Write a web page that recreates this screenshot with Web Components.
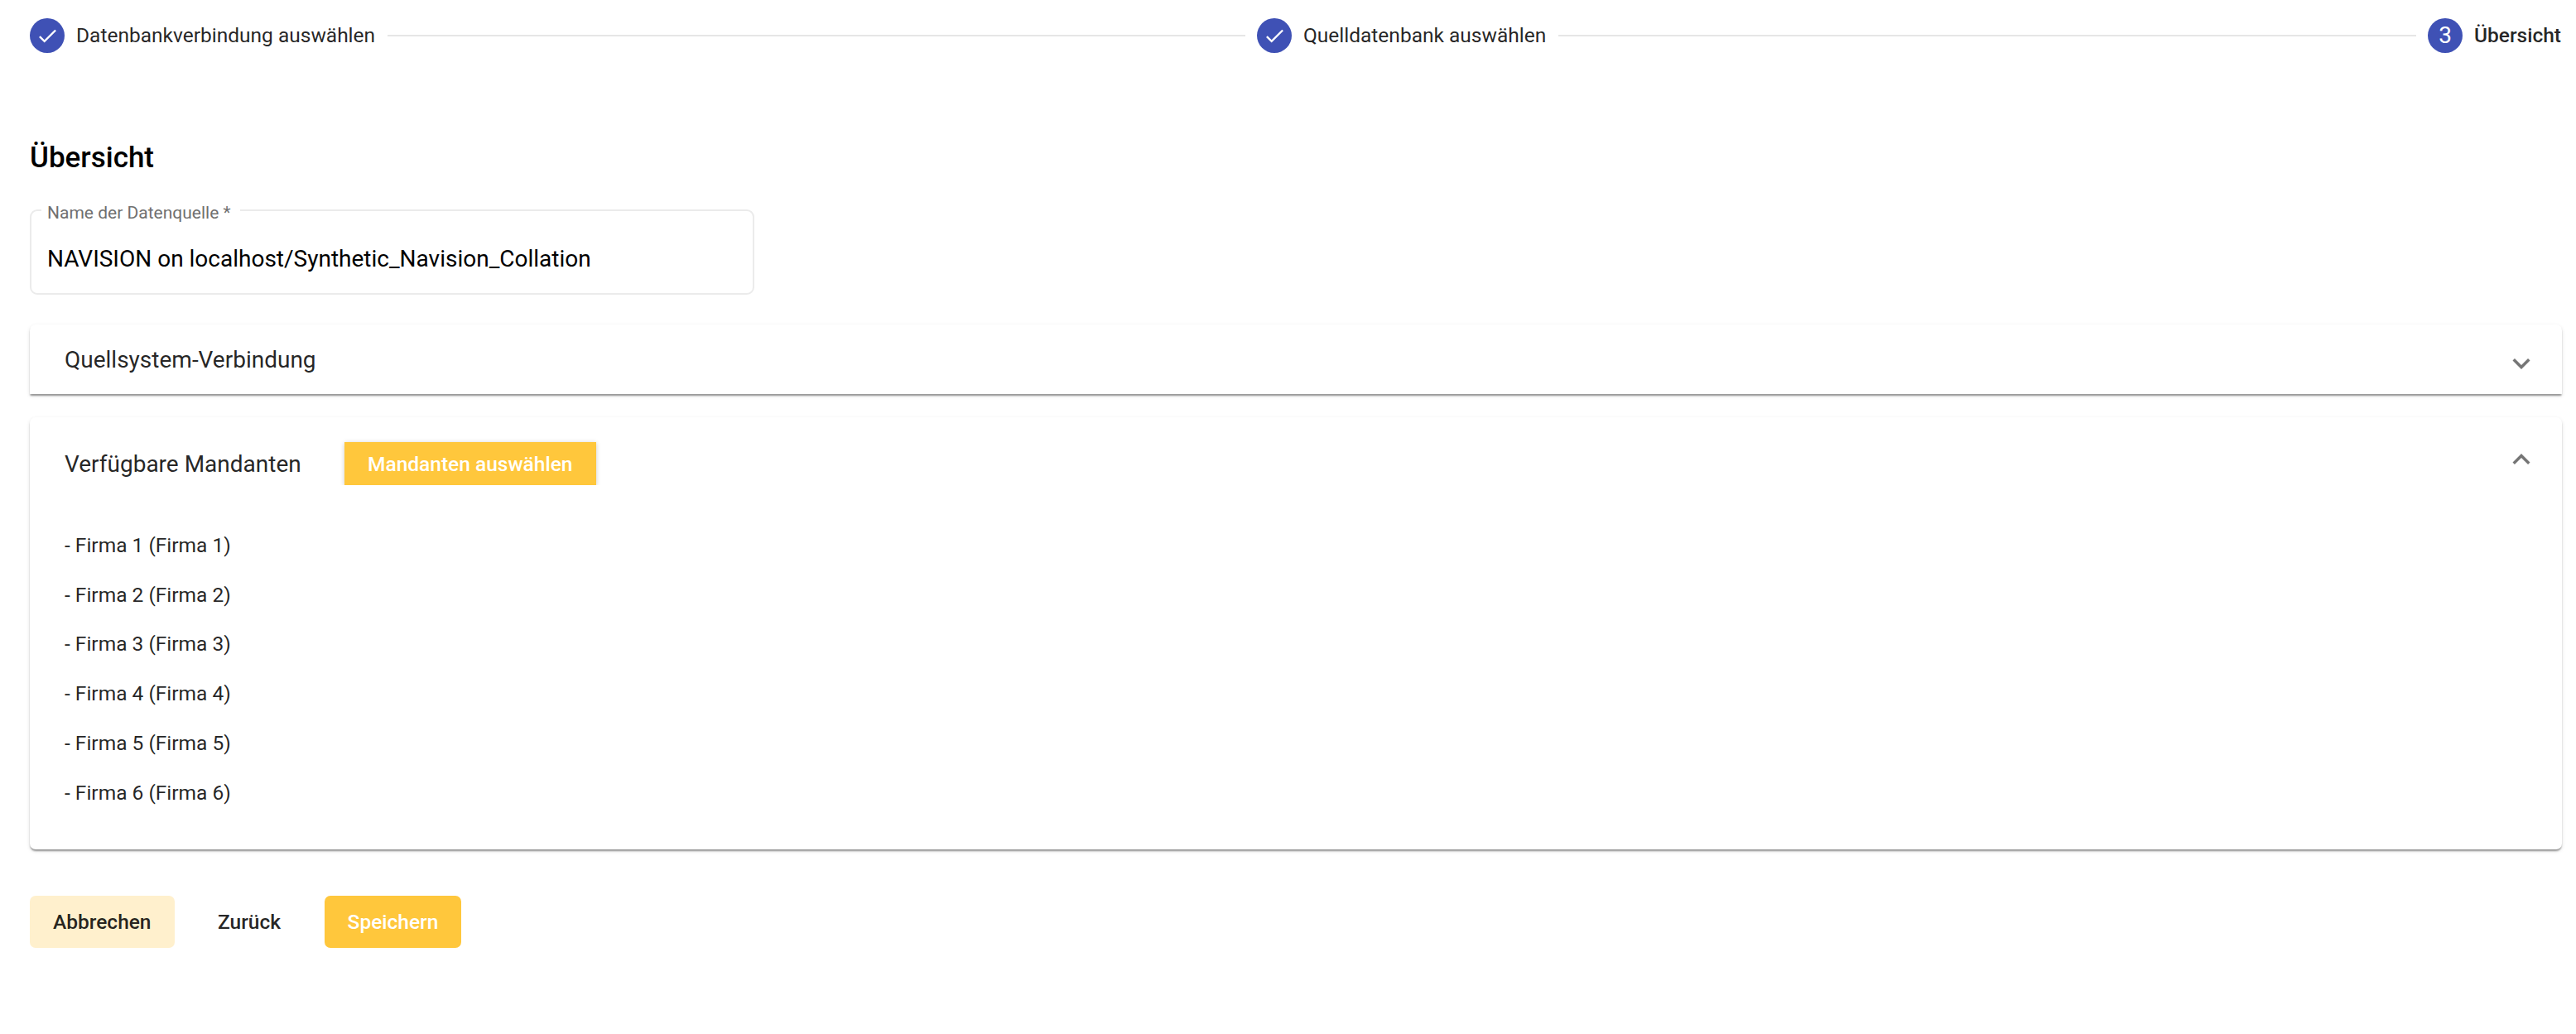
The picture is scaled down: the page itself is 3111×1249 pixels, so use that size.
<!DOCTYPE html>
<html lang="de">
<head>
<meta charset="utf-8">
<title>Übersicht</title>
<style>
    html, body { margin: 0; background: #fff; }
    body { font-family: Roboto, "Liberation Sans", sans-serif; color: rgba(0,0,0,.87); }
</style>
</head>
<body>
<wizard-page>
    <wizard-stepper slot="stepper">
        <wizard-step done>Datenbankverbindung auswählen</wizard-step>
        <wizard-step done>Quelldatenbank auswählen</wizard-step>
        <wizard-step number="3" active>Übersicht</wizard-step>
    </wizard-stepper>
    <page-title>Übersicht</page-title>
    <outlined-field label="Name der Datenquelle *">NAVISION on localhost/Synthetic_Navision_Collation</outlined-field>
    <accordion-card title-text="Quellsystem-Verbindung"></accordion-card>
    <accordion-card title-text="Verfügbare Mandanten" expanded>
        <flat-button slot="action" kind="select">Mandanten auswählen</flat-button>
        <company-row>- Firma 1 (Firma 1)</company-row>
        <company-row>- Firma 2 (Firma 2)</company-row>
        <company-row>- Firma 3 (Firma 3)</company-row>
        <company-row>- Firma 4 (Firma 4)</company-row>
        <company-row>- Firma 5 (Firma 5)</company-row>
        <company-row>- Firma 6 (Firma 6)</company-row>
    </accordion-card>
    <button-bar>
        <flat-button kind="soft">Abbrechen</flat-button>
        <flat-button kind="text">Zurück</flat-button>
        <flat-button kind="primary">Speichern</flat-button>
    </button-bar>
</wizard-page>

<script>
// tiny helper, every element just needs a shadow root with its markup
function shadow(el, html) {
    el.attachShadow({ mode: 'open' }).innerHTML = html;
}

class WizardPage extends HTMLElement {
    constructor() {
        super();
        shadow(this, `
        <style>
            :host { display: block; padding: 22px 17px 0 36px; }
        </style>
        <slot name="stepper"></slot>
        <slot></slot>`);
    }
}

class WizardStepper extends HTMLElement {
    constructor() {
        super();
        shadow(this, `
        <style>
            :host { display: flex; align-items: center; margin-right: 1px; }
        </style>
        <slot></slot>`);
    }
}

class WizardStep extends HTMLElement {
    constructor() {
        super();
        const number = this.getAttribute('number');
        const badge = number
            ? number
            : `<svg width="28.5" height="28.5" viewBox="0 0 24 24" fill="#fff"><path d="M9 16.17 4.83 12l-1.42 1.41L9 19 21 7l-1.41-1.41z"/></svg>`;
        shadow(this, `
        <style>
            /* grow from auto so the spare width goes evenly to the lines */
            :host { display: flex; align-items: center; flex: 1 1 auto; font-size: 24.5px; line-height: 42px; white-space: nowrap; }
            :host(:last-child) { flex: 0 0 auto; }
            :host(:last-child) .line { display: none; }
            .badge {
                flex: none; width: 42px; height: 42px; border-radius: 50%;
                background: #3f51b5; color: #fff; font-size: 28px;
                display: flex; align-items: center; justify-content: center;
            }
            .label { margin-left: 14px; color: rgba(0,0,0,.87); }
            :host([active]) .label { font-weight: 500; }
            .line { flex: 1; height: 2px; background: #e6e6e6; margin: -1px 14px 0 15px; }
        </style>
        <span class="badge">${badge}</span>
        <span class="label"><slot></slot></span>
        <span class="line"></span>`);
    }
}

class PageTitle extends HTMLElement {
    constructor() {
        super();
        shadow(this, `
        <style>
            :host { display: block; margin-top: 106px; font-size: 35px; line-height: 42px; font-weight: 500; color: #000; }
        </style>
        <slot></slot>`);
    }
}

class OutlinedField extends HTMLElement {
    constructor() {
        super();
        shadow(this, `
        <style>
            :host {
                display: block; position: relative; box-sizing: border-box;
                width: 875px; height: 103px; margin-top: 41px;
                border: 2px solid #ebebeb; border-radius: 9px;
                padding: 38px 19px 0; font-size: 28px; line-height: 40px; color: #000;
            }
            .legend {
                position: absolute; left: 12px; top: -10px; padding: 0 11px 0 7px;
                background: #fff; font-size: 21px; line-height: 24px; color: #707070;
            }
        </style>
        <span class="legend">${this.getAttribute('label')}</span>
        <slot></slot>`);
    }
}

class AccordionCard extends HTMLElement {
    constructor() {
        super();
        shadow(this, `
        <style>
            :host {
                display: block; margin-top: 36px; background: #fff;
                border-radius: 7px 7px 0 0;
                box-shadow: 0 3px 2px -1px rgba(0,0,0,.25), 0 2px 2px 0 rgba(0,0,0,.14), 0 2px 5px 0 rgba(0,0,0,.12);
            }
            :host([expanded]) { margin-top: 28px; border-radius: 7px; }
            .head { display: flex; align-items: center; height: 84px; padding: 0 28px 0 42px; }
            :host([expanded]) .head { height: 112px; }
            .title { font-size: 28px; color: rgba(0,0,0,.87); }
            .action { margin-left: 52px; }
            .grow { flex: 1; }
            svg { display: block; }
            :host([expanded]) svg { transform: rotate(180deg); }
            .body { display: none; padding: 13px 42px 39px; }
            :host([expanded]) .body { display: block; }
        </style>
        <div class="head">
            <span class="title">${this.getAttribute('title-text')}</span>
            <span class="action"><slot name="action"></slot></span>
            <span class="grow"></span>
            <svg width="42" height="42" viewBox="0 -2.86 24 24" fill="#757575"><path d="M16.59 8.59 12 13.17 7.41 8.59 6 10l6 6 6-6z"/></svg>
        </div>
        <div class="body"><slot></slot></div>`);
    }
}

class CompanyRow extends HTMLElement {
    constructor() {
        super();
        shadow(this, `
        <style>
            :host { display: block; font-size: 24.5px; line-height: 59.7px; color: rgba(0,0,0,.87); }
        </style>
        <slot></slot>`);
    }
}

class ButtonBar extends HTMLElement {
    constructor() {
        super();
        shadow(this, `
        <style>
            :host { display: flex; gap: 24.5px; margin-top: 56px; }
        </style>
        <slot></slot>`);
    }
}

class FlatButton extends HTMLElement {
    constructor() {
        super();
        shadow(this, `
        <style>
            :host {
                display: inline-flex; align-items: center; justify-content: center;
                height: 63px; padding: 0 28px; border-radius: 7px;
                font-size: 24.5px; font-weight: 500; white-space: nowrap;
                color: rgba(0,0,0,.87);
            }
            :host([kind="soft"]) { background: #fff0cd; }
            :host([kind="primary"]) { background: #ffc73c; color: #fff; }
            /* the shadow is cut off under this one, only top and sides show */
            :host([kind="select"]) {
                box-sizing: border-box; width: 304px; height: 52px; padding: 0;
                border-radius: 0; background: #ffc73c; color: #fff;
                box-shadow: 0 1px 6px rgba(0,0,0,.2);
                clip-path: inset(-8px -8px 0 -8px);
            }
        </style>
        <slot></slot>`);
    }
}

customElements.define('wizard-page', WizardPage);
customElements.define('wizard-stepper', WizardStepper);
customElements.define('wizard-step', WizardStep);
customElements.define('page-title', PageTitle);
customElements.define('outlined-field', OutlinedField);
customElements.define('accordion-card', AccordionCard);
customElements.define('company-row', CompanyRow);
customElements.define('button-bar', ButtonBar);
customElements.define('flat-button', FlatButton);
</script>
</body>
</html>
